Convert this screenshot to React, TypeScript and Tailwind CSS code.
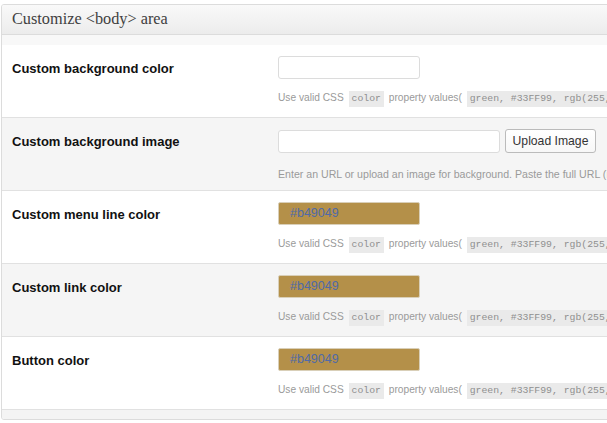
import React from "react";

const Code = ({ children }: { children: React.ReactNode }) => (
  <code className="mx-[2px] inline-block bg-[#eaeaea] px-[3px] text-[9.8px] leading-[16px] text-[#8f8f8f] [font-family:'Liberation_Mono',monospace]">
    {children}
  </code>
);

const ColorHelp = () => (
  <div className="mt-[11px] whitespace-nowrap text-[10.2px] leading-[16px] text-[#9a9a9a]">
    Use valid CSS <Code>color</Code> property values( <Code>green, #33FF99, rgb(255, 255, 255)</Code>)
  </div>
);

const ColorInput = ({ value }: { value?: string }) =>
  value ? (
    <div className="flex h-[23px] w-[142px] items-center rounded-[2px] border border-[#d9cfb8] bg-[#b49049] pl-[11px] text-[12.5px] text-[#4f6aa8]">
      {value}
    </div>
  ) : (
    <div className="h-[23px] w-[142px] rounded-[3px] border border-[#dcdcdc] bg-white" />
  );

const Row = ({
  label,
  gray,
  children,
}: {
  label: string;
  gray?: boolean;
  children: React.ReactNode;
}) => (
  <div
    className={`flex h-[73px] border-b border-[#e1e1e1] pt-[11px] ${gray ? "bg-[#f5f5f5]" : "bg-white"}`}
  >
    <div className="w-[276px] shrink-0 pl-[10px] pt-px text-[13px] font-bold leading-[23px] text-[#111]">
      {label}
    </div>
    <div className="flex flex-col">{children}</div>
  </div>
);

export default function App() {
  return (
    <div className="h-[423px] w-[607px] overflow-hidden bg-white [font-family:'Liberation_Sans',Arial,sans-serif]">
      <div className="ml-px mt-[4px] w-[660px] overflow-hidden rounded-[3px] border border-[#dcdcdc]">
        <div className="flex h-[30px] items-center border-b border-[#dcdcdc] bg-gradient-to-b from-[#f9f9f9] to-[#ececec] pl-[10px] text-[16.3px] text-[#404040] [font-family:'Liberation_Serif',Georgia,serif]">
          Customize &lt;body&gt; area
        </div>
        <div className="h-[10px] bg-[#f8f8f8]" />
        <Row label="Custom background color">
          <ColorInput />
          <ColorHelp />
        </Row>
        <Row label="Custom background image" gray>
          <div className="flex items-center">
            <div className="h-[23px] w-[222px] rounded-[3px] border border-[#dcdcdc] bg-white" />
            <button className="ml-[5px] flex h-[24px] w-[91px] items-center justify-center rounded-[3px] border border-[#bbbbbb] bg-gradient-to-b from-white to-[#f7f7f7] text-[12.2px] text-[#333]">
              Upload Image
            </button>
          </div>
          <div className="mt-[13px] whitespace-nowrap text-[10.6px] leading-[16px] text-[#9a9a9a]">
            Enter an URL or upload an image for background. Paste the full URL (include http://).
          </div>
        </Row>
        <Row label="Custom menu line color">
          <ColorInput value="#b49049" />
          <ColorHelp />
        </Row>
        <Row label="Custom link color" gray>
          <ColorInput value="#b49049" />
          <ColorHelp />
        </Row>
        <Row label="Button color">
          <ColorInput value="#b49049" />
          <ColorHelp />
        </Row>
        <div className="h-[9px] bg-[#f4f4f4]" />
      </div>
    </div>
  );
}
